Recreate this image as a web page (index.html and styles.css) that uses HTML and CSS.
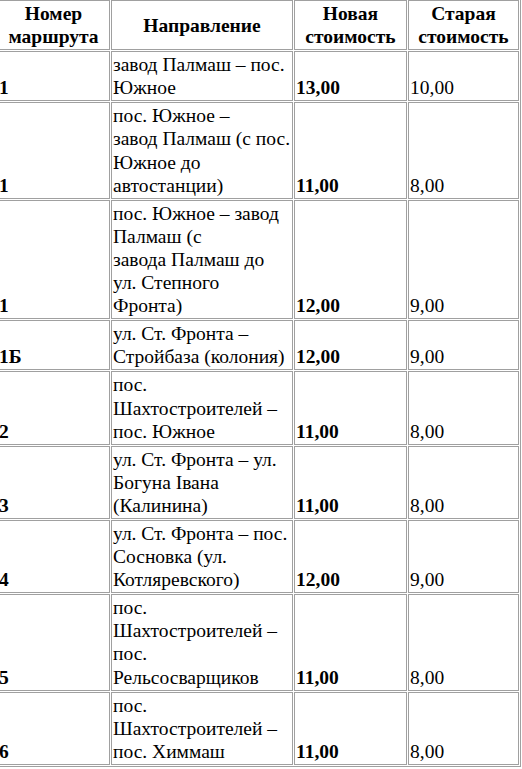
FILE: index.html
```html
<!DOCTYPE html>
<html>
<head>
<meta charset="utf-8">
<link rel="stylesheet" href="styles.css">
</head>
<body>
<table class="fares">
  <colgroup>
    <col class="c-num">
    <col class="c-dir">
    <col class="c-new">
    <col class="c-old">
  </colgroup>
  <tr class="head">
    <th>Номер<br>маршрута</th>
    <th>Направление</th>
    <th>Новая<br>стоимость</th>
    <th>Старая<br>стоимость</th>
  </tr>
  <tr>
    <td class="num">1</td>
    <td>завод Палмаш – пос.<br>Южное</td>
    <td class="new">13,00</td>
    <td>10,00</td>
  </tr>
  <tr>
    <td class="num">1</td>
    <td>пос. Южное –<br>завод Палмаш (с пос.<br>Южное до<br>автостанции)</td>
    <td class="new">11,00</td>
    <td>8,00</td>
  </tr>
  <tr>
    <td class="num">1</td>
    <td>пос. Южное – завод<br>Палмаш (с<br>завода Палмаш до<br>ул. Степного<br>Фронта)</td>
    <td class="new">12,00</td>
    <td>9,00</td>
  </tr>
  <tr>
    <td class="num">1Б</td>
    <td>ул. Ст. Фронта –<br>Стройбаза (колония)</td>
    <td class="new">12,00</td>
    <td>9,00</td>
  </tr>
  <tr>
    <td class="num">2</td>
    <td>пос.<br>Шахтостроителей –<br>пос. Южное</td>
    <td class="new">11,00</td>
    <td>8,00</td>
  </tr>
  <tr>
    <td class="num">3</td>
    <td>ул. Ст. Фронта – ул.<br>Богуна Івана<br>(Калинина)</td>
    <td class="new">11,00</td>
    <td>8,00</td>
  </tr>
  <tr>
    <td class="num">4</td>
    <td>ул. Ст. Фронта – пос.<br>Сосновка (ул.<br>Котляревского)</td>
    <td class="new">12,00</td>
    <td>9,00</td>
  </tr>
  <tr>
    <td class="num">5</td>
    <td>пос.<br>Шахтостроителей –<br>пос.<br>Рельсосварщиков</td>
    <td class="new">11,00</td>
    <td>8,00</td>
  </tr>
  <tr>
    <td class="num">6</td>
    <td>пос.<br>Шахтостроителей –<br>пос. Химмаш</td>
    <td class="new">11,00</td>
    <td>8,00</td>
  </tr>
</table>
</body>
</html>
```
FILE: styles.css
```css
html, body {
  margin: 0;
  padding: 0;
  background: #ffffff;
  overflow: hidden;
}
body {
  font-family: "Liberation Serif", "Times New Roman", serif;
  font-size: 19.5px;
  line-height: 23.1px;
  color: #000;
}
.fares {
  table-layout: fixed;
  width: 526px;
  margin: -2px 0 0 -5px;
  border: 1px solid #a0a0a0;
  border-collapse: separate;
  border-spacing: 1px;
}
.c-num { width: 113px; }
.c-dir { width: 182px; }
.c-new { width: 113px; }
.c-old { width: 111px; }
.fares th,
.fares td {
  border: 1px solid #a0a0a0;
  padding: 1px;
  vertical-align: bottom;
  text-align: left;
}
.fares th {
  font-weight: bold;
  text-align: center;
  vertical-align: middle;
}
.num,
.new {
  font-weight: bold;
}
```
